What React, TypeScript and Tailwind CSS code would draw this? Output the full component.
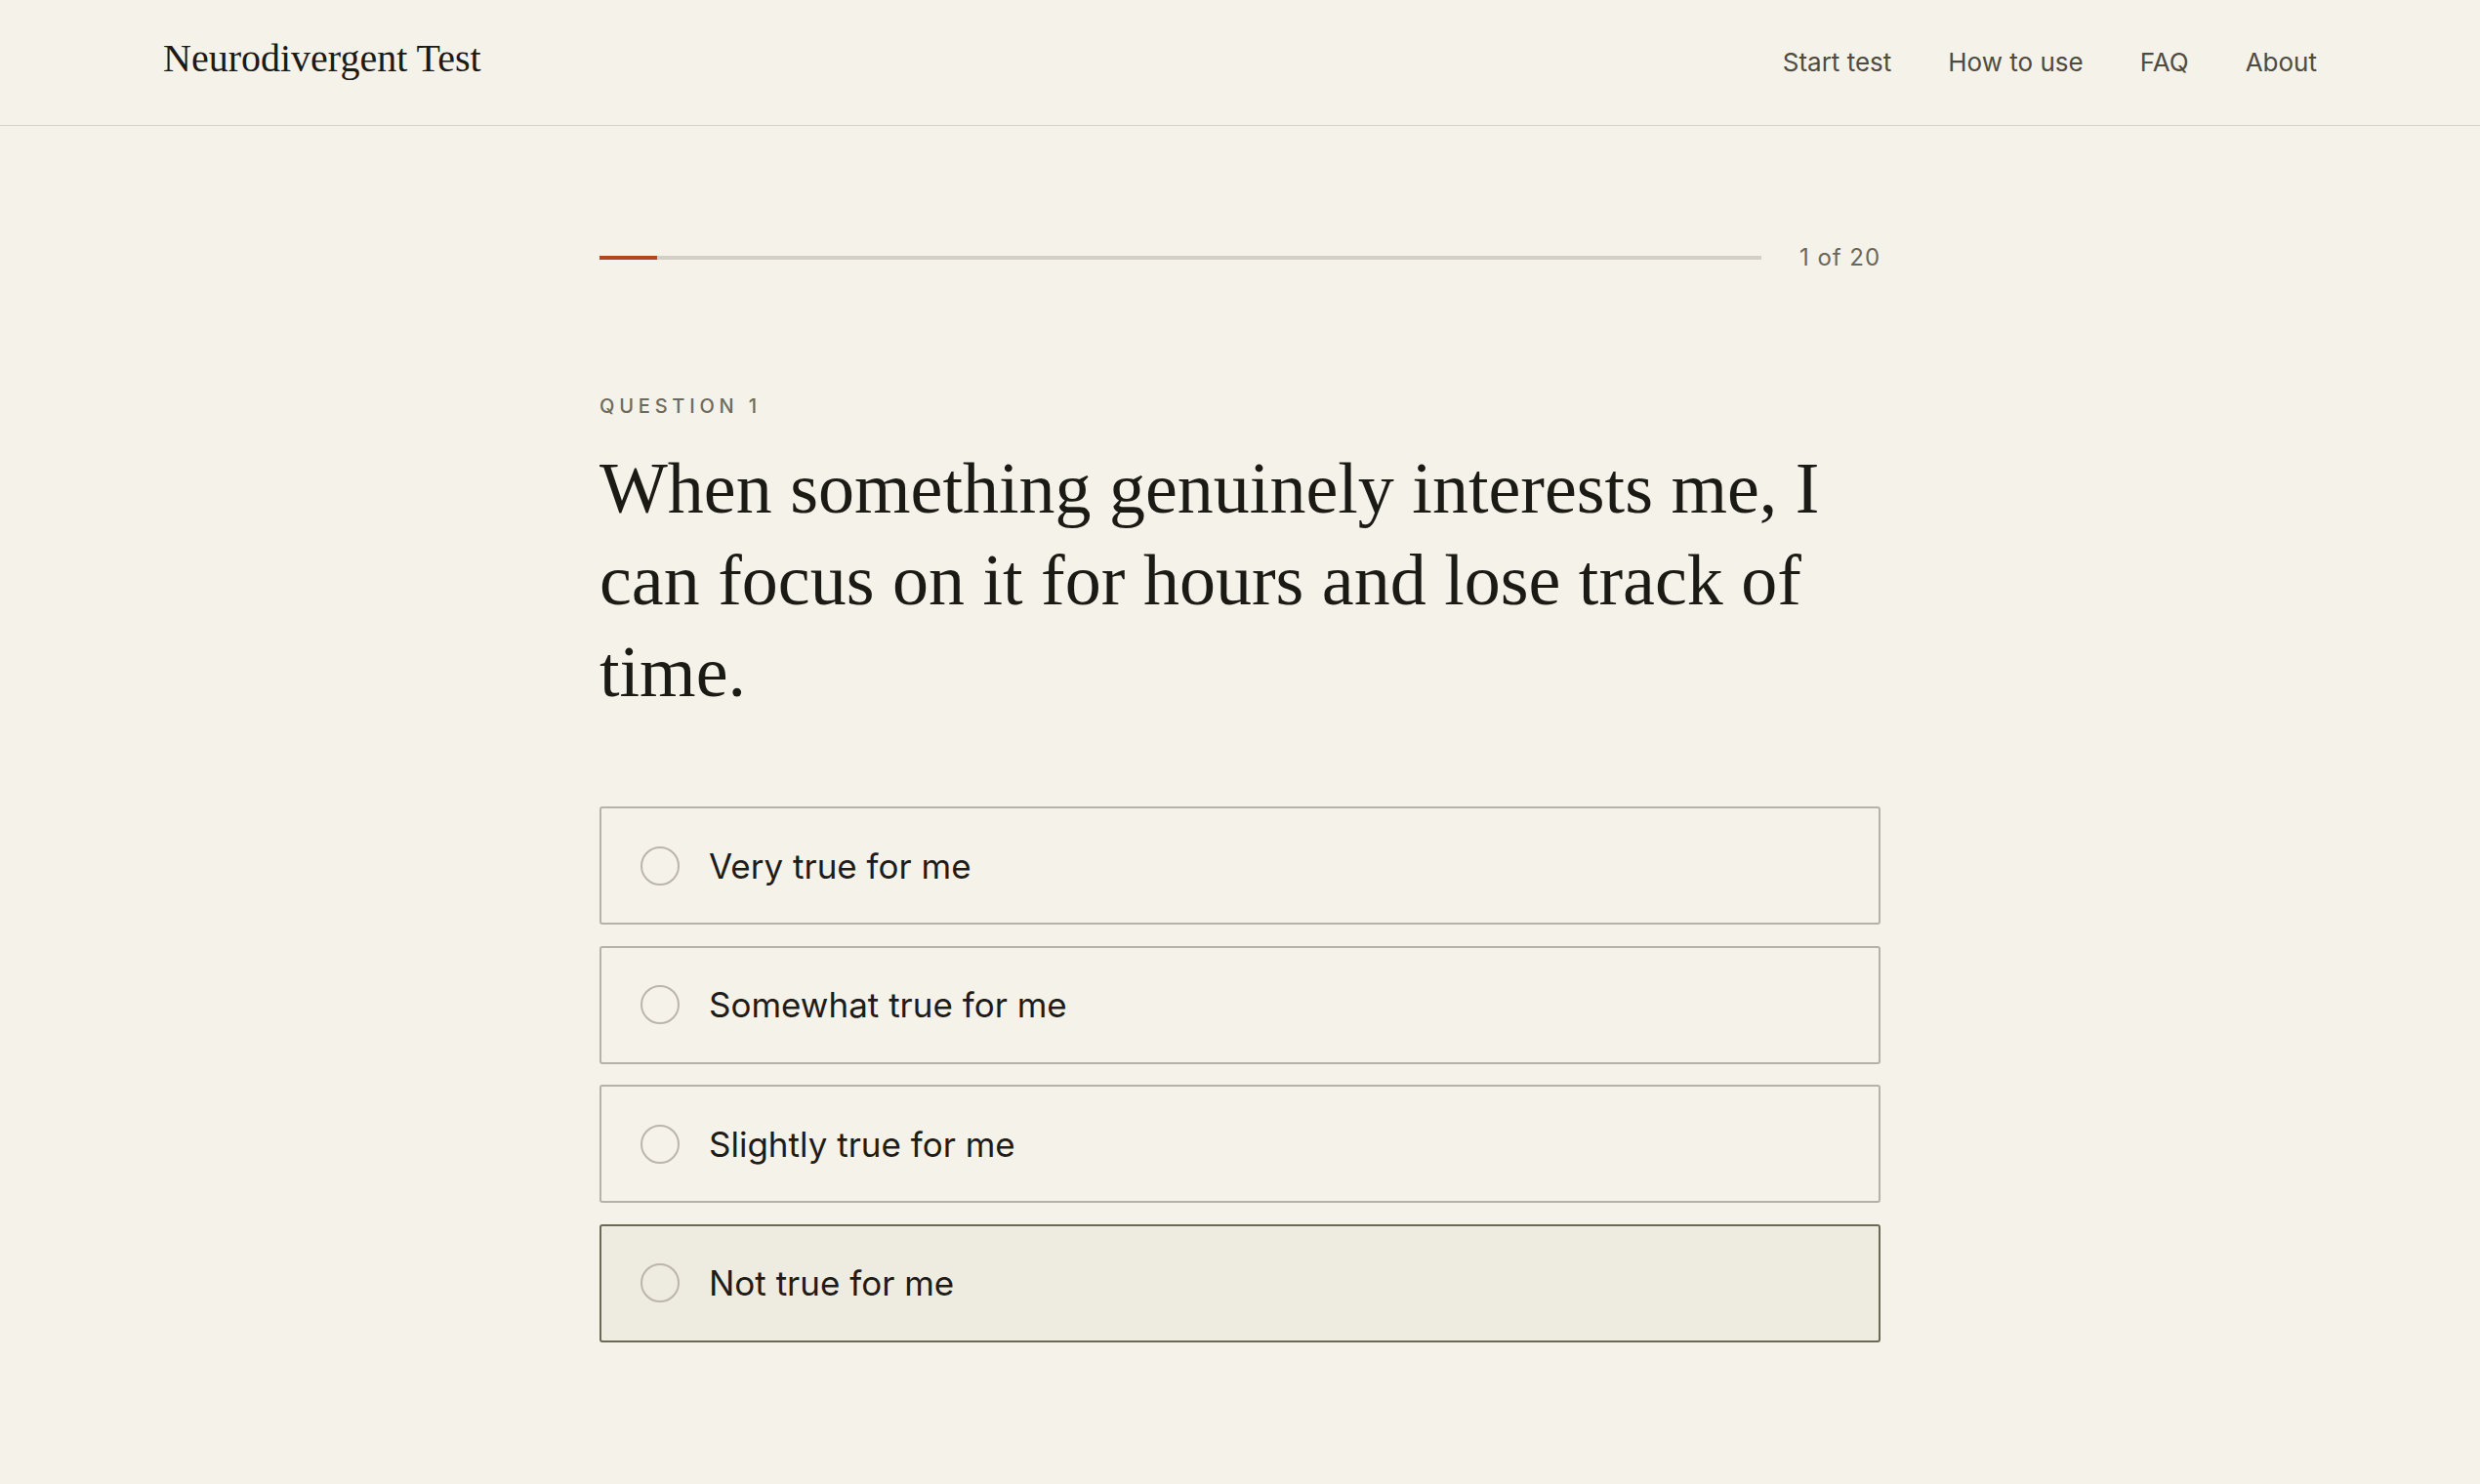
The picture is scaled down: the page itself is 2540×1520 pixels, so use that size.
import React from 'react';

const options = [
  'Very true for me',
  'Somewhat true for me',
  'Slightly true for me',
  'Not true for me',
];

const navLinks = ['Start test', 'How to use', 'FAQ', 'About'];

function Header() {
  return (
    <header className="h-[128px] box-content border-b border-[#d6d3ca] px-[167px] flex items-center justify-between">
      <a
        href="#"
        className="mb-[10px] text-[40px] leading-[45px] text-[#1c1a16] font-['Liberation_Serif',serif]"
      >
        Neurodivergent Test
      </a>
      <nav className="flex items-center gap-[58px] font-['Inter',sans-serif] text-[26px] text-[#4f4b3f]">
        {navLinks.map((link) => (
          <a key={link} href="#" className="leading-[32px]">
            {link}
          </a>
        ))}
      </nav>
    </header>
  );
}

function Progress({ current, total }: { current: number; total: number }) {
  return (
    <div className="flex items-center gap-[39px]">
      <div className="flex-1 h-[4px] bg-[#d3cfc6]">
        <div
          className="h-full bg-[#b5451e]"
          style={{ width: `${(current / total) * 100}%` }}
        />
      </div>
      <span className="font-['Inter',sans-serif] text-[24px] leading-[32px] tracking-[0.04em] text-[#6b6759]">
        {current} of {total}
      </span>
    </div>
  );
}

function Option({ label, active }: { label: string; active?: boolean }) {
  return (
    <button
      className={`w-full h-[121px] flex items-center gap-[30px] pl-[40px] border-2 rounded-[3px] text-left ${
        active ? 'bg-[#eeebe0] border-[#6b6a55]' : 'bg-transparent border-[#b5b2a9]'
      }`}
    >
      <span className="w-[40px] h-[40px] shrink-0 rounded-full border-2 border-[#bab6ad]" />
      <span className="font-['Inter',sans-serif] text-[35px] leading-[40px] text-[#1f1c17]">
        {label}
      </span>
    </button>
  );
}

export default function App() {
  return (
    <div className="min-h-[1520px] bg-[#f5f2ea]">
      <Header />
      <main className="w-[1312px] mx-auto pt-[119px] pb-[120px]">
        <Progress current={1} total={20} />

        <p className="mt-[122px] font-['Inter',sans-serif] font-medium text-[20px] leading-[28px] tracking-[0.24em] text-[#6e6a5c]">
          QUESTION 1
        </p>
        <h1 className="mt-[23px] font-['Liberation_Serif',serif] text-[74px] leading-[94px] text-[#1c1a15]">
          When something genuinely interests me, I can focus on it for hours and lose track of
          time.
        </h1>

        <div className="mt-[91px] flex flex-col gap-[21.5px]">
          {options.map((opt, i) => (
            <Option key={opt} label={opt} active={i === options.length - 1} />
          ))}
        </div>
      </main>
    </div>
  );
}
